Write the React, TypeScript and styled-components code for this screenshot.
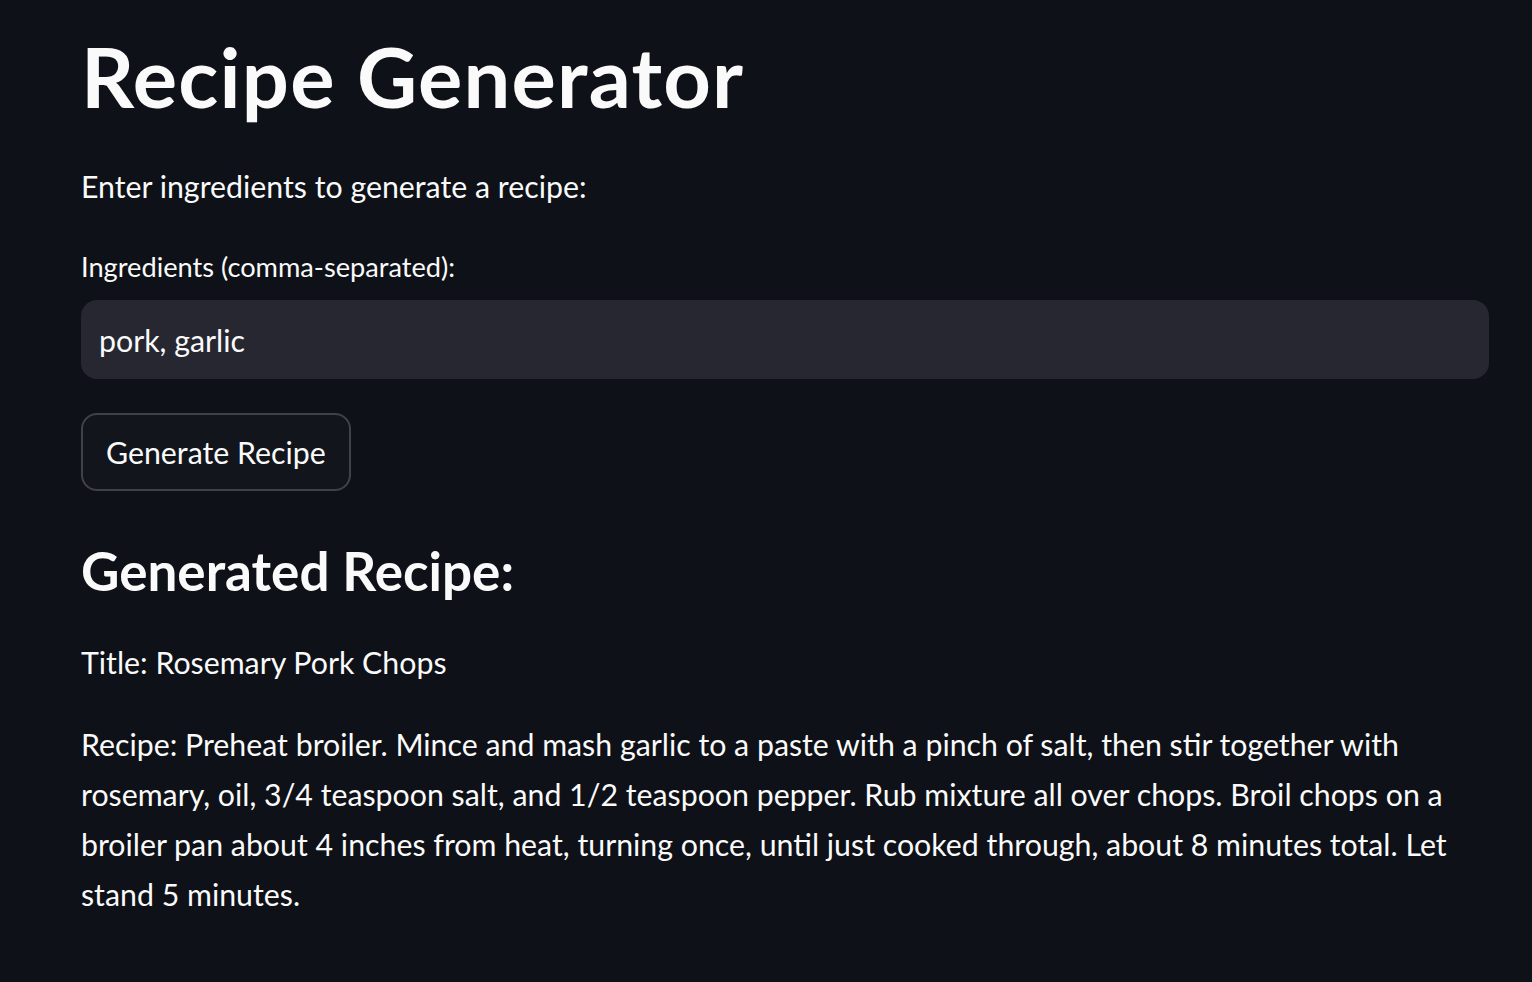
import React from "react";
import styled, { createGlobalStyle } from "styled-components";

const GlobalStyle = createGlobalStyle`
  html, body { margin: 0; padding: 0; background: #0e1117; }
  body { color: #fafafa; font-family: "Lato", "Noto Sans", sans-serif; }
  * { box-sizing: border-box; }
`;

const Main = styled.main`
  min-height: 982px;
  padding: 28px 43px 0 81px;
  display: flex;
  flex-direction: column;
`;

const Title = styled.h1`
  margin: 0;
  font-size: 83px;
  line-height: 96px;
  font-weight: 700;
  letter-spacing: 1.2px;
`;

const Text = styled.p<{ $gap: number }>`
  margin: ${(p) => p.$gap}px 0 0;
  font-size: 30.3px;
  line-height: 50px;
  font-weight: 400;
`;

const Label = styled.label`
  margin-top: 36px;
  font-size: 27.2px;
  line-height: 40px;
`;

const Input = styled.input`
  margin-top: 13px;
  width: 100%;
  height: 79px;
  border: none;
  border-radius: 16px;
  background: #262730;
  color: #fafafa;
  font-family: inherit;
  font-size: 30.3px;
  padding: 0 18px;
  outline: none;
`;

const ButtonRow = styled.div`
  margin-top: 34px;
  display: flex;
`;

const Button = styled.button`
  height: 78px;
  padding: 0 23px;
  border: 2px solid rgba(250, 250, 250, 0.2);
  border-radius: 16px;
  background: #12151c;
  color: #fafafa;
  font-family: inherit;
  font-size: 30.3px;
  line-height: 74px;
`;

const Subheader = styled.h2`
  margin: 45px 0 0;
  font-size: 53px;
  line-height: 70px;
  font-weight: 700;
`;

export default function App() {
  return (
    <>
      <GlobalStyle />
      <Main>
        <Title>Recipe Generator</Title>
        <Text $gap={37}>Enter ingredients to generate a recipe:</Text>
        <Label htmlFor="ingredients">Ingredients (comma-separated):</Label>
        <Input id="ingredients" defaultValue="pork, garlic" />
        <ButtonRow>
          <Button>Generate Recipe</Button>
        </ButtonRow>
        <Subheader>Generated Recipe:</Subheader>
        <Text $gap={31}>Title: Rosemary Pork Chops</Text>
        <Text $gap={32}>
          Recipe: Preheat broiler. Mince and mash garlic to a paste with a pinch of salt, then stir together with
          rosemary, oil, 3/4 teaspoon salt, and 1/2 teaspoon pepper. Rub mixture all over chops. Broil chops on a
          broiler pan about 4 inches from heat, turning once, until just cooked through, about 8 minutes total. Let
          stand 5 minutes.
        </Text>
      </Main>
    </>
  );
}
